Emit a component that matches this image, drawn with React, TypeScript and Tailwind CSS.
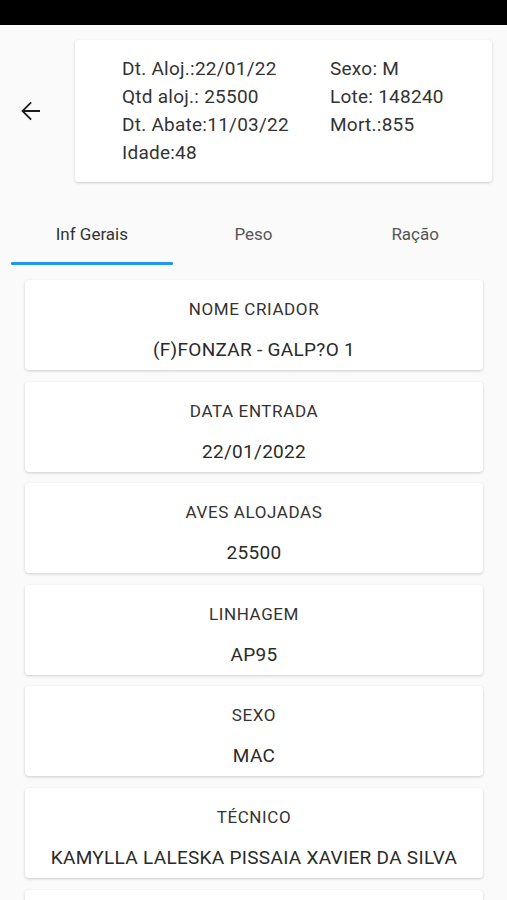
import React from "react";

const items = [
  { label: "NOME CRIADOR", value: "(F)FONZAR - GALP?O 1" },
  { label: "DATA ENTRADA", value: "22/01/2022" },
  { label: "AVES ALOJADAS", value: "25500" },
  { label: "LINHAGEM", value: "AP95" },
  { label: "SEXO", value: "MAC" },
  { label: "TÉCNICO", value: "KAMYLLA LALESKA PISSAIA XAVIER DA SILVA" },
  { label: "", value: "" },
];

export default function App() {
  return (
    <div
      className="w-[507px] h-[900px] overflow-hidden bg-[#fafafa] flex flex-col"
      style={{ fontFamily: "Roboto, 'Noto Sans', sans-serif" }}
    >
      <div className="h-[25px] bg-black shrink-0" />
      <div className="flex items-center pt-[15px] pr-[15px]">
        <div className="w-[75px] flex justify-center pr-[15px]">
          <svg width="30" height="30" viewBox="0 0 24 24" fill="#1a1a1a">
            <path d="M20 11.2H7.83l5.59-5.59L12.4 4.6l-7.4 7.4 7.4 7.4 1.02-1.02L7.83 12.8H20v-1.6z" />
          </svg>
        </div>
        <div className="flex-1 h-[142px] bg-white rounded-[4px] shadow-[0_1px_3px_rgba(0,0,0,0.18)] flex items-start pt-[15px] pl-[47px] text-[19px] leading-[28px] tracking-[0.25px] text-[#333]">
          <div className="w-[208px]">
            <div>Dt. Aloj.:22/01/22</div>
            <div>Qtd aloj.: 25500</div>
            <div>Dt. Abate:11/03/22</div>
            <div>Idade:48</div>
          </div>
          <div>
            <div>Sexo: M</div>
            <div>Lote: 148240</div>
            <div>Mort.:855</div>
          </div>
        </div>
      </div>
      <div className="flex px-[11px] mt-[40px]">
        <div className="flex-1 flex flex-col items-center">
          <div className="text-[17px] leading-6 text-[#333]">Inf Gerais</div>
          <div className="mt-[16px] h-[3px] w-full bg-[#2196f3] rounded-[1px]" />
        </div>
        <div className="flex-1 flex flex-col items-center">
          <div className="text-[17px] leading-6 text-[#555]">Peso</div>
        </div>
        <div className="flex-1 flex flex-col items-center">
          <div className="text-[17px] leading-6 text-[#555]">Ração</div>
        </div>
      </div>
      <div className="flex flex-col gap-[11.6px] mt-[15px] pl-[25px] pr-[24px]">
        {items.map((it, i) => (
          <div
            key={i}
            className="h-[90px] shrink-0 bg-white rounded-[4px] shadow-[0_1px_3px_rgba(0,0,0,0.18)] flex flex-col items-center pt-[17px]"
          >
            <div className="text-[17px] leading-6 tracking-[0.6px] text-[#333]">{it.label}</div>
            <div className="mt-[15px] text-[19px] leading-[28px] tracking-[0.3px] text-[#2a2a2a]">{it.value}</div>
          </div>
        ))}
      </div>
    </div>
  );
}
